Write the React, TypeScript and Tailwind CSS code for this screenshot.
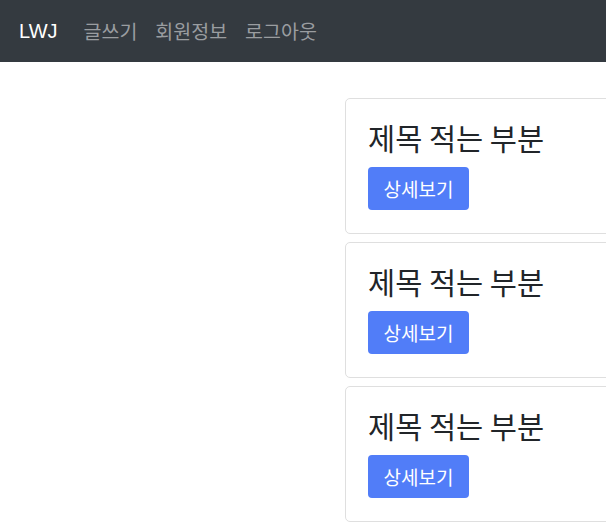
const cards = [1, 2, 3];

function Navbar() {
  return (
    <nav className="h-[62px] bg-[#343a40] flex items-center px-[19px]">
      <span className="text-white text-[20px] font-['Liberation_Sans','Noto_Sans_CJK_KR',sans-serif] mr-[26px]">
        LWJ
      </span>
      <div className="flex items-center gap-[18px] text-[19.5px] text-[#9a9da0]">
        <a>글쓰기</a>
        <a>회원정보</a>
        <a>로그아웃</a>
      </div>
    </nav>
  );
}

function PostCard() {
  return (
    <div className="w-[320px] h-[136px] border border-[#dfdfdf] rounded-[5px] bg-white px-[22px] pt-[21px] box-border">
      <h2 className="h-[34px] mb-[13px] text-[29.5px] leading-[34px] text-[#212529]">제목 적는 부분</h2>
      <button className="w-[101px] h-[43px] rounded-[4px] bg-[#517df8] text-white text-[19px] leading-[43px]">
        상세보기
      </button>
    </div>
  );
}

export default function App() {
  return (
    <div className="w-[606px] h-[532px] overflow-hidden bg-white font-['Noto_Sans_CJK_KR','Noto_Sans',sans-serif]">
      <Navbar />
      <div className="flex pt-[36px]">
        <div className="w-[345px] shrink-0" />
        <div className="flex flex-col gap-[8px]">
          {cards.map((c) => (
            <PostCard key={c} />
          ))}
        </div>
      </div>
    </div>
  );
}
